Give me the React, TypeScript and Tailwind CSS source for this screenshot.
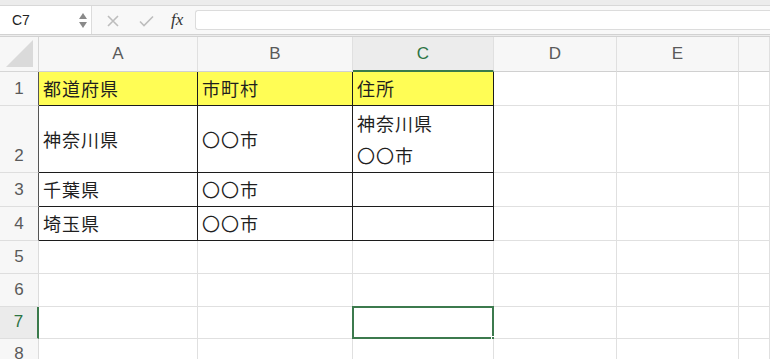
import React from 'react';

const colWidths = ['w-[39px]', 'w-[159px]', 'w-[155px]', 'w-[141px]', 'w-[123px]', 'w-[122px]', 'flex-1'];
const letters = ['A', 'B', 'C', 'D', 'E', ''];

interface RowDef {
  num: string;
  h: string;
  cells: React.ReactNode[];
}

const rows: RowDef[] = [
  { num: '1', h: 'h-[34px]', cells: ['都道府県', '市町村', '住所'] },
  {
    num: '2',
    h: 'h-[67px]',
    cells: [
      '神奈川県',
      '〇〇市',
      <div className="leading-[32px]">
        <div>神奈川県</div>
        <div>〇〇市</div>
      </div>,
    ],
  },
  { num: '3', h: 'h-[34px]', cells: ['千葉県', '〇〇市', ''] },
  { num: '4', h: 'h-[34px]', cells: ['埼玉県', '〇〇市', ''] },
  { num: '5', h: 'h-[33px]', cells: [] },
  { num: '6', h: 'h-[33px]', cells: [] },
  { num: '7', h: 'h-[32px]', cells: [] },
  { num: '8', h: 'h-[32px]', cells: [] },
];

const cjk = { fontFamily: '"Noto Sans CJK JP", "Noto Sans", sans-serif' };

export default function App() {
  return (
    <div className="w-[770px] h-[359px] overflow-hidden bg-white" style={{ fontFamily: '"Liberation Sans", Arial, sans-serif' }}>
      {/* top strip */}
      <div className="h-[6px] bg-[#ececec] border-b border-[#d8d8d8]" />

      {/* formula bar */}
      <div className="h-[28px] flex bg-[#f8f8f8]">
        <div className="w-[92px] bg-white border-r border-[#dcdcdc] flex items-center justify-between pl-[12px] pr-[4px]">
          <span className="text-[14px] text-[#222]">C7</span>
          <div className="flex flex-col gap-[3px]">
            <svg width="8" height="6" viewBox="0 0 8 6"><path d="M4 0 L8 6 L0 6 Z" fill="#8a8a8a" /></svg>
            <svg width="8" height="6" viewBox="0 0 8 6"><path d="M0 0 L8 0 L4 6 Z" fill="#8a8a8a" /></svg>
          </div>
        </div>
        <div className="w-[103px] flex items-center pl-[15px]">
          <svg width="12" height="12" viewBox="0 0 12 12" className="mt-[2px]">
            <path d="M1 1 L11 11 M11 1 L1 11" stroke="#bdbdbd" strokeWidth="1.6" />
          </svg>
          <svg width="15" height="12" viewBox="0 0 15 12" className="ml-[20px] mt-[2px]">
            <path d="M1 6.5 L5 10.5 L14 1.5" stroke="#bdbdbd" strokeWidth="1.6" fill="none" />
          </svg>
          <span className="ml-[17px] text-[17px] italic text-[#333]" style={{ fontFamily: '"Liberation Serif", "Times New Roman", serif' }}>
            fx
          </span>
        </div>
        <div className="flex-1 my-[4px] bg-white border border-r-0 border-[#dcdcdc] rounded-l-[3px]" />
      </div>

      {/* separator */}
      <div className="h-[3px] bg-[#ececec] border-y border-[#d2d2d2]" />

      {/* column headers */}
      <div className="flex h-[35px]">
        <div className={`${colWidths[0]} shrink-0 bg-[#f7f7f7] border-r border-b border-[#d6d6d6] relative`}>
          <svg width="30" height="30" viewBox="0 0 30 30" className="absolute right-[3px] bottom-[2px]">
            <path d="M28 1 L28 28 L1 28 Z" fill="#dadada" />
          </svg>
        </div>
        {letters.map((l, i) => {
          const sel = l === 'C';
          return (
            <div
              key={i}
              className={`${colWidths[i + 1]} shrink-0 flex items-center justify-center text-[17px] border-r border-[#e0e0e0] ${
                sel ? 'bg-[#ececec] text-[#2d7444] border-b-2 border-b-[#3a7a4b]' : 'bg-[#f7f7f7] text-[#5a5a5a] border-b border-b-[#d0d0d0]'
              }`}
            >
              {l}
            </div>
          );
        })}
      </div>

      {/* rows */}
      {rows.map((r, ri) => {
        const inTable = ri < 4;
        const sel = r.num === '7';
        return (
          <div key={r.num} className={`flex ${r.h}`}>
            <div
              className={`${colWidths[0]} shrink-0 flex items-end justify-center pb-[6px] text-[17px] border-b border-[#dedede] ${
                sel
                  ? 'bg-[#ebebeb] text-[#2d7444] border-r-2 border-r-[#3a7a4b]'
                  : inTable
                  ? 'bg-[#f7f7f7] text-[#5a5a5a] border-r border-r-[#555]'
                  : 'bg-[#f7f7f7] text-[#5a5a5a] border-r border-r-[#dcdcdc]'
              }`}
            >
              <span className="leading-[20px]">{r.num}</span>
            </div>
            {letters.map((_, ci) => {
              const tableCell = inTable && ci < 3;
              const yellow = ri === 0 && ci < 3;
              const isC7 = sel && ci === 2;
              const borders = tableCell ? 'border-r border-b border-[#1c1c1c]' : 'border-r border-b border-[#e0e0e0]';
              return (
                <div
                  key={ci}
                  className={`${colWidths[ci + 1]} shrink-0 relative flex items-center pl-[4px] text-[18px] text-[#1f1f1f] tracking-[1px] ${borders} ${
                    yellow ? 'bg-[#fffd55]' : 'bg-white'
                  }`}
                  style={cjk}
                >
                  {r.cells[ci]}
                  {isC7 && (
                    <>
                      <div className="absolute -left-px -top-px -right-px -bottom-px border-2 border-[#3c7a4d]" />
                      <div className="absolute -right-[4px] -bottom-[4px] w-[6px] h-[6px] bg-[#3c7a4d] border border-white" />
                    </>
                  )}
                </div>
              );
            })}
          </div>
        );
      })}
    </div>
  );
}
